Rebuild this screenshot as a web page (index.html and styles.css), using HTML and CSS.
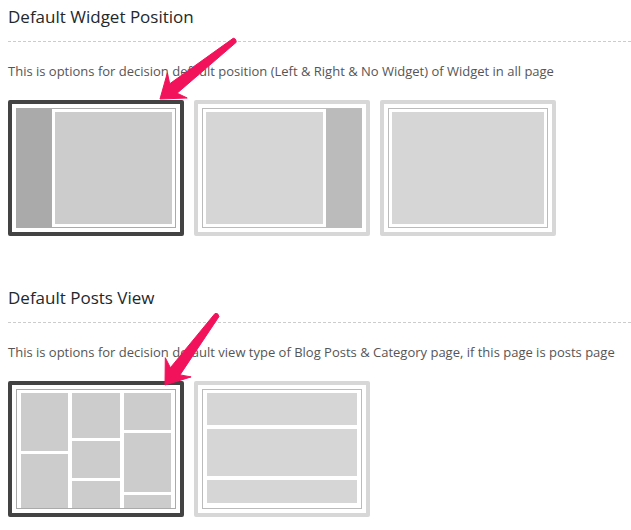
FILE: index.html
```html
<!DOCTYPE html>
<html>
<head>
<meta charset="utf-8">
<link rel="stylesheet" href="styles.css">
</head>
<body>
<section class="section">
  <h2 class="title">Default Widget Position</h2>
  <p class="desc">This is options for decision default position (Left &amp; Right &amp; No Widget) of Widget in all page</p>
  <div class="choices">
    <div class="card selected">
      <div class="frame">
        <div class="side"></div>
        <div class="main"><div class="fill"></div></div>
      </div>
    </div>
    <div class="card">
      <div class="frame">
        <div class="main"><div class="fill"></div></div>
        <div class="side"></div>
      </div>
    </div>
    <div class="card">
      <div class="frame">
        <div class="main"><div class="fill"></div></div>
      </div>
    </div>
  </div>
</section>

<section class="section second">
  <h2 class="title">Default Posts View</h2>
  <p class="desc">This is options for decision default view type of Blog Posts &amp; Category page, if this page is posts page</p>
  <div class="choices">
    <div class="card selected">
      <div class="frame masonry">
        <div class="col">
          <div class="box h58"></div>
          <div class="box h60"></div>
        </div>
        <div class="col">
          <div class="box h45"></div>
          <div class="box h37"></div>
          <div class="box h30"></div>
        </div>
        <div class="col">
          <div class="box h37"></div>
          <div class="box h59"></div>
          <div class="box h20"></div>
        </div>
      </div>
    </div>
    <div class="card">
      <div class="frame list">
        <div class="row r1"></div>
        <div class="row r2"></div>
        <div class="row r3"></div>
      </div>
    </div>
  </div>
</section>

<svg class="arrows" width="631" height="530" viewBox="0 0 631 530" xmlns="http://www.w3.org/2000/svg">
  <path fill="#f2125b" stroke="#f2125b" stroke-width="1" stroke-linejoin="round"
        d="M160 99 L187.2 98 L177.1 93.2 L236.2 42.3 Q236 38 233.2 38.3 L169.7 83.8 L167.4 72.8 Z"/>
  <path fill="#f2125b" stroke="#f2125b" stroke-width="1" stroke-linejoin="round"
        d="M165 385 L191.1 376.9 L180 374.9 L219 316.5 Q218 312.5 215 313.5 L170.4 367.7 L165.3 357.7 Z"/>
</svg>
</body>
</html>
```
FILE: styles.css
```css
html, body {
  margin: 0;
  padding: 0;
  background: #ffffff;
}

body {
  position: relative;
  padding: 5px 0 0 8px;
  font-family: "Open Sans", "Noto Sans", sans-serif;
  overflow: hidden;
  height: 525px;
}

.section {
  display: flex;
  flex-direction: column;
}

.section.second {
  margin-top: 50px;
}

.title {
  margin: 0;
  font-size: 17px;
  font-weight: 400;
  line-height: 24px;
  color: #23282d;
  padding-bottom: 12px;
  border-bottom: 1px dashed #cccccc;
}

.desc {
  margin: 20px 0 0 0;
  font-size: 13px;
  line-height: 18px;
  color: #555555;
  white-space: nowrap;
}

.choices {
  display: flex;
  gap: 10px;
  margin-top: 20px;
}

.card {
  box-sizing: border-box;
  width: 176px;
  height: 136px;
  border: 4px solid #d7d7d7;
  border-radius: 2px;
  padding: 4px;
  background: #fff;
}

.card.selected {
  border-color: #434343;
}

.frame {
  box-sizing: border-box;
  height: 100%;
  border: 1px solid #bbbbbb;
  display: flex;
  overflow: hidden;
}

.selected .frame {
  border-color: #aaaaaa;
}

.side {
  width: 35px;
  background: #bbbbbb;
}

.selected .side {
  background: #aaaaaa;
}

.main {
  flex: 1;
  padding: 3px;
  display: flex;
}

.fill {
  flex: 1;
  background: #d6d6d6;
}

.selected .fill {
  background: #cccccc;
}

/* masonry */
.masonry {
  padding: 3px 4px 0 4px;
  gap: 4px;
}

.col {
  flex: 1;
  display: flex;
  flex-direction: column;
  gap: 3px;
}

.box {
  flex: none;
  background: #cccccc;
}

.h58 { height: 58px; }
.h60 { height: 60px; }
.h45 { height: 45px; }
.h37 { height: 37px; }
.h30 { height: 30px; }
.h59 { height: 59px; }
.h20 { height: 20px; }

/* list */
.list {
  flex-direction: column;
  padding: 3px 4px 4px 4px;
  gap: 4px;
}

.row {
  background: #d6d6d6;
}

.r1 { height: 32px; }
.r2 { height: 47px; }
.r3 { height: 23px; }

.arrows {
  position: absolute;
  left: 0;
  top: 0;
  pointer-events: none;
}
```
